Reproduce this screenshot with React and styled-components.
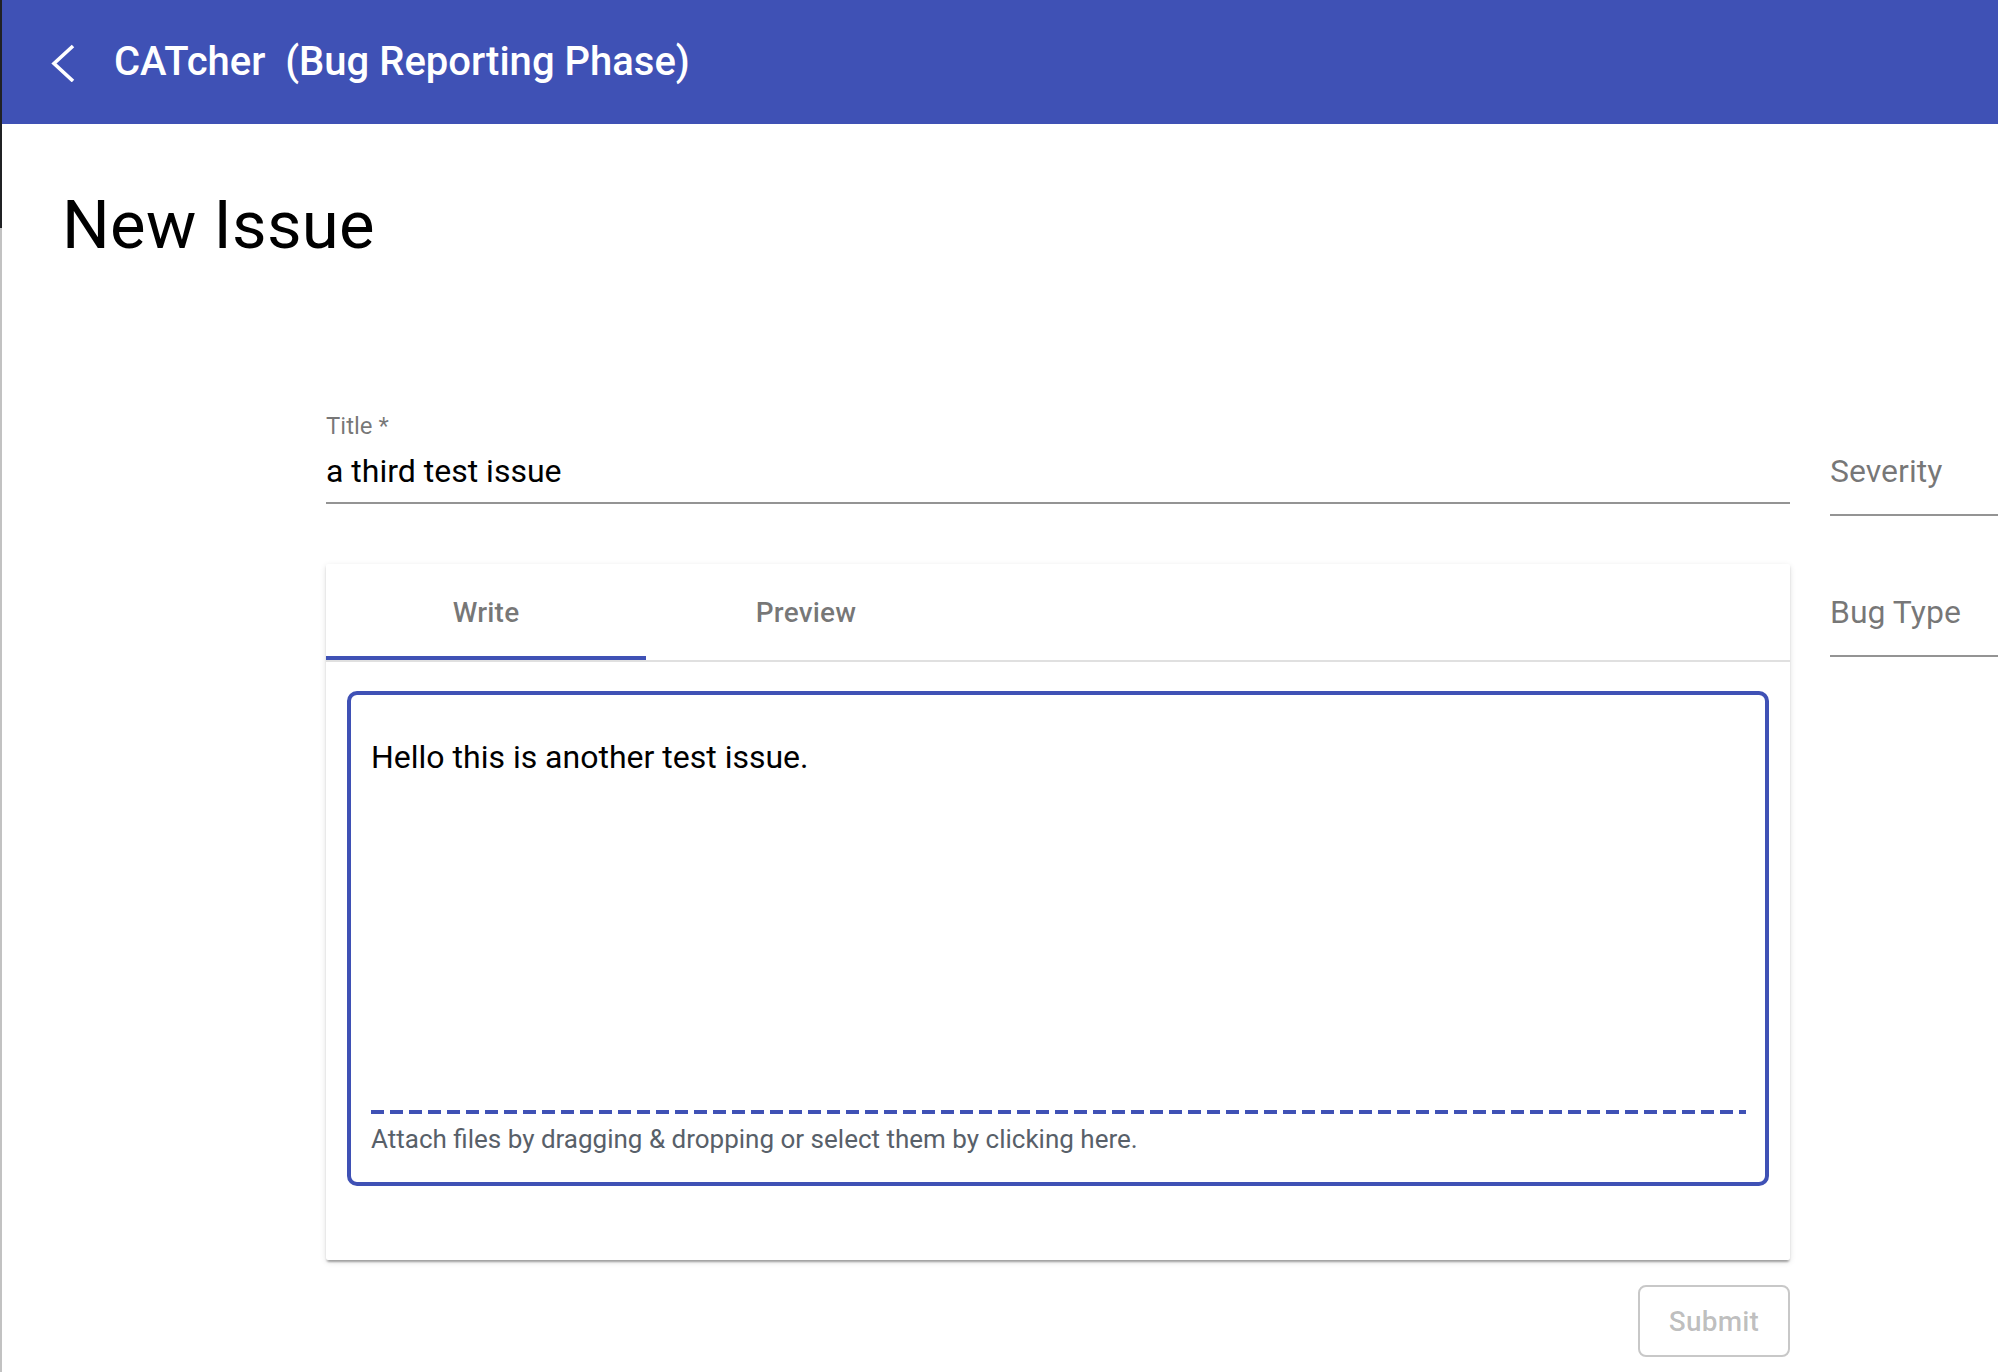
import React from "react";
import styled, { createGlobalStyle } from "styled-components";

const GlobalStyle = createGlobalStyle`
  html, body {
    margin: 0;
    padding: 0;
    background: #ffffff;
    overflow: hidden;
  }
  body {
    font-family: Roboto, "Liberation Sans", Arial, sans-serif;
    color: rgba(0, 0, 0, 0.87);
  }
  * { box-sizing: border-box; }
`;

const PRIMARY = "#3f51b5";

const Page = styled.div`
  position: relative;
  min-height: 100vh;
  width: 1998px;
  border-left: 2px solid #c2c2c2;

  &::before {
    content: "";
    position: absolute;
    left: -2px;
    top: 0;
    width: 2px;
    height: 228px;
    background: #202124;
  }
`;

const Toolbar = styled.header`
  height: 124px;
  background: ${PRIMARY};
  display: flex;
  align-items: center;
  padding-left: 48px;
  color: #ffffff;
`;

const BackButton = styled.button`
  display: flex;
  align-items: center;
  justify-content: center;
  width: 26px;
  height: 40px;
  padding: 0;
  border: 0;
  background: transparent;
  cursor: pointer;
`;

const AppTitle = styled.h1`
  margin: 0 0 0 38px;
  font-size: 40px;
  font-weight: 500;
  letter-spacing: 0;
  white-space: pre;
  line-height: 48px;
`;

const Main = styled.main`
  padding-left: 60px;
`;

const PageTitle = styled.h2`
  margin: 61px 0 0 0;
  font-size: 67px;
  font-weight: 400;
  line-height: 80px;
  color: #000000;
  letter-spacing: 0.3px;
`;

const FormRow = styled.div`
  display: flex;
  gap: 40px;
  margin: 147px 0 0 264px;
`;

const LeftColumn = styled.div`
  width: 1464px;
  flex-shrink: 0;
  display: flex;
  flex-direction: column;
`;

const RightColumn = styled.div`
  width: 420px;
  flex-shrink: 0;
  display: flex;
  flex-direction: column;
`;

const TextField = styled.div`
  display: flex;
  flex-direction: column;
  border-bottom: 2px solid #949494;
  padding-bottom: 11px;
`;

const FloatLabel = styled.label`
  font-size: 24px;
  line-height: 28px;
  color: rgba(0, 0, 0, 0.54);
`;

const InputValue = styled.div`
  margin-top: 11px;
  font-size: 32px;
  line-height: 40px;
  color: #000000;
`;

const SelectField = styled.div`
  margin-top: ${(p) => p.$offset}px;
  padding-bottom: 23px;
  border-bottom: 2px solid #949494;
  font-size: 32px;
  line-height: 40px;
  color: rgba(0, 0, 0, 0.54);
`;

const Card = styled.section`
  margin-top: 60px;
  background: #ffffff;
  border-radius: 2px;
  box-shadow: 0 4px 2px -2px rgba(0, 0, 0, 0.2), 0 2px 2px 0 rgba(0, 0, 0, 0.14),
    0 2px 6px 0 rgba(0, 0, 0, 0.12);
`;

const TabHeader = styled.div`
  display: flex;
  height: 98px;
  border-bottom: 2px solid #e0e0e0;
`;

const Tab = styled.div`
  position: relative;
  width: 320px;
  display: flex;
  align-items: center;
  justify-content: center;
  font-size: 28px;
  font-weight: 500;
  color: rgba(0, 0, 0, 0.54);
  letter-spacing: 0.2px;

  &::after {
    content: "";
    position: absolute;
    left: 0;
    right: 0;
    bottom: 0;
    height: 4px;
    background: ${(p) => (p.$active ? PRIMARY : "transparent")};
  }
`;

const CardBody = styled.div`
  padding: 29px 21px 74px 21px;
`;

const EditorBox = styled.div`
  border: 4px solid ${PRIMARY};
  border-radius: 10px;
  padding: 0 19px 28px 20px;
`;

const EditorText = styled.div`
  height: 415px;
  padding-top: 38px;
  font-size: 32px;
  line-height: 48px;
  color: #000000;
`;

const DashedRule = styled.div`
  height: 4px;
  background: repeating-linear-gradient(
    to right,
    ${PRIMARY} 0,
    ${PRIMARY} 13px,
    transparent 13px,
    transparent 19px
  );
`;

const AttachHint = styled.div`
  margin-top: 10px;
  font-size: 26px;
  line-height: 30px;
  color: #586069;
`;

const Actions = styled.div`
  display: flex;
  justify-content: flex-end;
  margin-top: 25px;
`;

const SubmitButton = styled.button`
  width: 152px;
  height: 72px;
  border: 2px solid #c8c8c8;
  border-radius: 8px;
  background: #ffffff;
  font-family: inherit;
  font-size: 28px;
  font-weight: 500;
  color: rgba(0, 0, 0, 0.26);
  letter-spacing: 0.2px;
`;

const ChevronLeft = () => (
  <svg width="26" height="40" viewBox="0 0 26 40" aria-hidden="true">
    <polyline
      points="23,4 4,21.5 23,39"
      fill="none"
      stroke="#ffffff"
      strokeWidth="3.6"
      strokeLinejoin="miter"
    />
  </svg>
);

export default function App() {
  return (
    <>
      <GlobalStyle />
      <Page>
        <Toolbar>
          <BackButton aria-label="Back">
            <ChevronLeft />
          </BackButton>
          <AppTitle>{"CATcher  (Bug Reporting Phase)"}</AppTitle>
        </Toolbar>
        <Main>
          <PageTitle>New Issue</PageTitle>
          <FormRow>
            <LeftColumn>
              <TextField>
                <FloatLabel>Title *</FloatLabel>
                <InputValue>a third test issue</InputValue>
              </TextField>
              <Card>
                <TabHeader>
                  <Tab $active>Write</Tab>
                  <Tab>Preview</Tab>
                </TabHeader>
                <CardBody>
                  <EditorBox>
                    <EditorText>Hello this is another test issue.</EditorText>
                    <DashedRule />
                    <AttachHint>
                      Attach files by dragging &amp; dropping or select them by clicking here.
                    </AttachHint>
                  </EditorBox>
                </CardBody>
              </Card>
              <Actions>
                <SubmitButton disabled>Submit</SubmitButton>
              </Actions>
            </LeftColumn>
            <RightColumn>
              <SelectField $offset={39}>Severity</SelectField>
              <SelectField $offset={76}>Bug Type</SelectField>
            </RightColumn>
          </FormRow>
        </Main>
      </Page>
    </>
  );
}
